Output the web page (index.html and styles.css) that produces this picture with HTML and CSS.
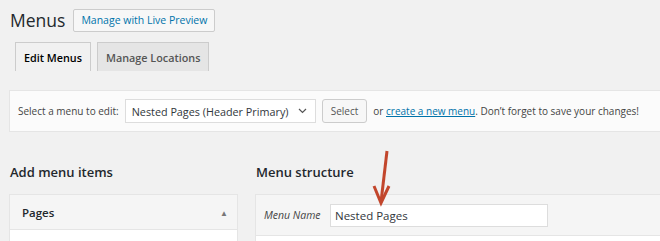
FILE: index.html
```html
<!DOCTYPE html>
<html lang="en">
<head>
  <meta charset="UTF-8" />
  <title>Menus</title>
  <link rel="stylesheet" href="styles.css">
</head>
<body>
  <div class="wrap">
    <div class="title-row">
      <h1>Menus</h1>
      <a class="btn-preview" href="#">Manage with Live Preview</a>
    </div>

    <div class="tabs">
      <a class="tab active" href="#">Edit Menus</a>
      <a class="tab" href="#">Manage Locations</a>
    </div>

    <div class="manage-menus">
      <label for="menu-select">Select a menu to edit:</label>
      <div class="select-box">
        <span>Nested Pages (Header Primary)</span>
        <svg width="9" height="6" viewBox="0 0 9 6"><path d="M1 1l3.5 3.5L8 1" fill="none" stroke="#555" stroke-width="1.2"/></svg>
      </div>
      <button class="btn-select">Select</button>
      <span class="hint">or <a href="#">create a new menu</a>. Don’t forget to save your changes!</span>
    </div>

    <div class="columns">
      <div class="col-left">
        <h2>Add menu items</h2>
        <div class="accordion">
          <div class="acc-head">
            <span>Pages</span>
            <span class="caret">▲</span>
          </div>
          <div class="acc-body"></div>
        </div>
      </div>
      <div class="col-right">
        <h2>Menu structure</h2>
        <div class="menu-edit">
          <div class="menu-head">
            <label>Menu Name</label>
            <div class="name-input">Nested Pages</div>
          </div>
          <div class="menu-body"></div>
        </div>
        <svg class="arrow" width="30" height="60" viewBox="0 0 30 60">
          <path d="M18 2L12 53" stroke="#c2462c" stroke-width="3" fill="none"/>
          <path d="M5 37L12 54L20 37" stroke="#c2462c" stroke-width="3" fill="none"/>
        </svg>
      </div>
    </div>
  </div>
</body>
</html>
```

FILE: styles.css
```css
html, body {
  margin: 0;
  overflow: hidden;
  height: 241px;
}
body {
  background-color: #f1f1f1;
  font-family: "Open Sans", "Noto Sans", sans-serif;
  color: #23282d;
  font-size: 10px;
}
.wrap {
  padding: 9px 0 0 9px;
  margin-right: -30px;
}
.title-row {
  display: flex;
  align-items: center;
  gap: 8px;
}
h1 {
  margin: 0 0 0 1px;
  font-size: 17.5px;
  font-weight: 400;
  line-height: 23px;
}
.btn-preview {
  display: inline-block;
  height: 21px;
  line-height: 21px;
  padding: 0 7px;
  border: 1px solid #ccc;
  border-radius: 2px;
  background: #f7f7f7;
  color: #0073aa;
  text-decoration: none;
  font-size: 10.5px;
}
.tabs {
  display: flex;
  gap: 6px;
  margin: 10px 0 0 6px;
  height: 29px;
}
.tab {
  display: flex;
  align-items: center;
  padding: 0 8px;
  border: 1px solid #ccc;
  border-bottom: none;
  background: #e5e5e5;
  color: #555;
  text-decoration: none;
  font-size: 10.8px;
  font-weight: 600;
}
.tab.active {
  background: #f1f1f1;
  color: #000;
}
.manage-menus {
  display: flex;
  align-items: center;
  margin-top: 19px;
  height: 40px;
  padding-left: 8px;
  border: 1px solid #e5e5e5;
  background: #fbfbfb;
  color: #444;
  white-space: nowrap;
}
.manage-menus label {
  margin-right: 6px;
}
.select-box {
  display: flex;
  align-items: center;
  justify-content: space-between;
  box-sizing: border-box;
  width: 191px;
  height: 24px;
  padding: 0 8px 0 6px;
  border: 1px solid #ddd;
  background: #fff;
  color: #32373c;
  font-size: 10.8px;
}
.btn-select {
  height: 24px;
  margin-left: 6px;
  padding: 0 8px;
  border: 1px solid #ccc;
  border-radius: 3px;
  background: #f7f7f7;
  color: #555;
  font-family: inherit;
  font-size: 10px;
}
.hint {
  margin-left: 6px;
}
.hint a {
  color: #0073aa;
}
.columns {
  display: flex;
  margin-top: 31px;
}
h2 {
  margin: 0 0 13px 1px;
  font-size: 13px;
  font-weight: 600;
  line-height: 18px;
}
.col-left {
  width: 229px;
}
.col-right {
  position: relative;
  flex: 1;
  margin-left: 17px;
}
.accordion {
  border: 1px solid #e5e5e5;
  border-bottom: none;
}
.acc-head {
  display: flex;
  justify-content: space-between;
  align-items: center;
  height: 34px;
  padding: 0 9px 0 12px;
  background: #f5f5f5;
  border-bottom: 1px solid #e5e5e5;
  font-size: 11.5px;
  font-weight: 600;
}
.caret {
  font-size: 8px;
  color: #777;
}
.acc-body {
  height: 12px;
  background: #fff;
}
.menu-edit {
  border: 1px solid #e5e5e5;
  border-bottom: none;
}
.menu-head {
  display: flex;
  align-items: center;
  height: 40px;
  padding-left: 8px;
  background: #f5f5f5;
  border-bottom: 1px solid #e5e5e5;
}
.menu-head label {
  font-style: italic;
  font-size: 10.5px;
  color: #444;
  width: 66px;
}
.name-input {
  width: 212px;
  height: 21px;
  line-height: 21px;
  padding-left: 4px;
  border: 1px solid #ddd;
  background: #fff;
  color: #32373c;
  font-size: 11.5px;
}
.menu-body {
  height: 6px;
  background: #fff;
}
.arrow {
  position: absolute;
  left: 114px;
  top: -14px;
}
```
